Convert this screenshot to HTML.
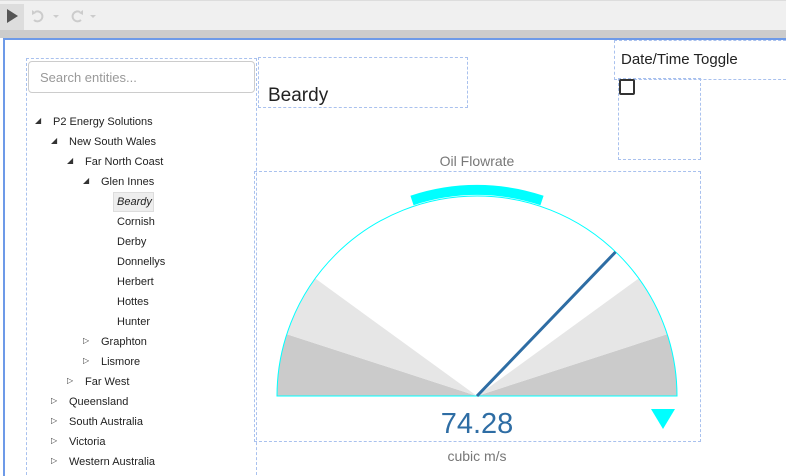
<!DOCTYPE html>
<html><head><meta charset="utf-8"><style>
html,body{margin:0;width:786px;height:476px;overflow:hidden}
body{background:#fff;font-family:"Liberation Sans",sans-serif;position:relative}
.a{position:absolute}
.d{position:absolute;border:1px dashed #a9c1ee}
.t{position:absolute;font-size:11px;color:#222;line-height:14px}
.ar{position:absolute;font-size:8px;color:#333}
</style></head><body>
<div class="a" style="left:0;top:0;width:786px;height:30px;background:#f0f0f0;border-top:1px solid #ddd;box-sizing:border-box"></div>
<div class="a" style="left:0;top:4px;width:24px;height:26px;background:#ddd"></div>
<svg class="a" style="left:0;top:0" width="110" height="30">
<path d="M7 9 L18 16 L7 23Z" fill="#555"/>
<path d="M35 12 A5 5 0 1 1 34 20" fill="none" stroke="#ccc" stroke-width="2"/><path d="M32 10 L36 13 L32 15Z" fill="#ccc"/>
<path d="M53 15 L59 15 L56 18Z" fill="#ccc"/>
<path d="M80 12 A5 5 0 1 0 81 20" fill="none" stroke="#ccc" stroke-width="2"/><path d="M83 10 L79 13 L83 15Z" fill="#ccc"/>
<path d="M90 15 L96 15 L93 18Z" fill="#ccc"/>
</svg>
<div class="a" style="left:0;top:30px;width:786px;height:8px;background:#ccc"></div>
<div class="a" style="left:3px;top:38px;width:790px;height:460px;border:2px solid #6d9ae8;box-sizing:border-box"></div>

<div class="d" style="left:26px;top:58px;width:229px;height:430px"></div>
<div class="a" style="left:28px;top:61px;width:227px;height:32px;border:1px solid #ccc;border-radius:4px;box-sizing:border-box;font-size:13px;color:#999;padding:8px 0 0 11px">Search entities...</div>

<div class="ar" style="left:35px;top:116px">◢</div><div class="t" style="left:53px;top:115px">P2 Energy Solutions</div>
<div class="ar" style="left:51px;top:136px">◢</div><div class="t" style="left:69px;top:135px">New South Wales</div>
<div class="ar" style="left:67px;top:156px">◢</div><div class="t" style="left:85px;top:155px">Far North Coast</div>
<div class="ar" style="left:83px;top:176px">◢</div><div class="t" style="left:101px;top:175px">Glen Innes</div>
<div class="a" style="left:113px;top:192px;width:39px;height:18px;background:#eee;border:1px solid #ddd"></div>
<div class="t" style="left:117px;top:195px;font-style:italic">Beardy</div>
<div class="t" style="left:117px;top:215px">Cornish</div>
<div class="t" style="left:117px;top:235px">Derby</div>
<div class="t" style="left:117px;top:255px">Donnellys</div>
<div class="t" style="left:117px;top:275px">Herbert</div>
<div class="t" style="left:117px;top:295px">Hottes</div>
<div class="t" style="left:117px;top:315px">Hunter</div>
<div class="ar" style="left:83px;top:336px">▷</div><div class="t" style="left:101px;top:335px">Graphton</div>
<div class="ar" style="left:83px;top:356px">▷</div><div class="t" style="left:101px;top:355px">Lismore</div>
<div class="ar" style="left:67px;top:376px">▷</div><div class="t" style="left:85px;top:375px">Far West</div>
<div class="ar" style="left:51px;top:396px">▷</div><div class="t" style="left:69px;top:395px">Queensland</div>
<div class="ar" style="left:51px;top:416px">▷</div><div class="t" style="left:69px;top:415px">South Australia</div>
<div class="ar" style="left:51px;top:436px">▷</div><div class="t" style="left:69px;top:435px">Victoria</div>
<div class="ar" style="left:51px;top:456px">▷</div><div class="t" style="left:69px;top:455px">Western Australia</div>

<div class="d" style="left:258px;top:57px;width:208px;height:49px"></div>
<div class="a" style="left:268px;top:85px;font-size:19px;color:#222">Beardy</div>

<div class="d" style="left:614px;top:40px;width:180px;height:38px"></div>
<div class="a" style="left:621px;top:51px;font-size:15px;color:#222">Date/Time Toggle</div>
<div class="d" style="left:618px;top:78px;width:81px;height:80px"></div>
<div class="a" style="left:619px;top:79px;width:16px;height:16px;border:2px solid #333;border-radius:2px;box-sizing:border-box"></div>

<div class="a" style="left:254px;top:153px;width:446px;text-align:center;font-size:14px;color:#777">Oil Flowrate</div>
<div class="d" style="left:254px;top:171px;width:445px;height:269px"></div>
<svg class="a" style="left:0;top:0" width="786" height="476">
<path d="M477 396 L277 396 A200 200 0 0 1 286.8 334.2Z" fill="#cbcbcb"/>
<path d="M477 396 L286.8 334.2 A200 200 0 0 1 315.2 278.4Z" fill="#e6e6e6"/>
<path d="M477 396 L677 396 A200 200 0 0 0 667.2 334.2Z" fill="#cbcbcb"/>
<path d="M477 396 L667.2 334.2 A200 200 0 0 0 638.8 278.4Z" fill="#e6e6e6"/>
<path d="M277 396 A200 200 0 0 1 677 396 Z" fill="none" stroke="#00ffff" stroke-width="1"/>
<path d="M412 200.5 A205 205 0 0 1 542 200.5" fill="none" stroke="#00ffff" stroke-width="10"/>
<line x1="477" y1="396" x2="615.5" y2="252" stroke="#2e6da4" stroke-width="3"/>
<path d="M651 409 L675 409 L663 429Z" fill="#00ffff"/>
</svg>
<div class="a" style="left:254px;top:408px;width:446px;text-align:center;font-size:29px;color:#2e6da4">74.28</div>
<div class="a" style="left:254px;top:448px;width:446px;text-align:center;font-size:14px;color:#777">cubic m/s</div>
</body></html>
